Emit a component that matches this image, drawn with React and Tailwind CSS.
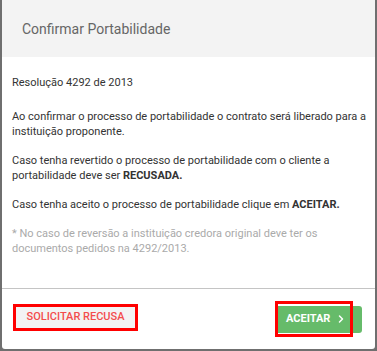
import React from 'react';
import { ChevronRight } from 'lucide-react';

const font = { fontFamily: 'Roboto, "Liberation Sans", sans-serif' };

export default function App() {
    return (
        <div className="w-[377px] h-[351px] bg-[#6f6f6f] overflow-hidden" style={font}>
            <div className="ml-[2px] w-[373px] h-[349px] bg-white rounded-b-[3px] flex flex-col overflow-hidden">
                <div className="h-[57px] bg-[#f3f3f3] flex items-center pl-[20px]">
                    <h2 className="text-[14px] text-[#666] leading-none">Confirmar Portabilidade</h2>
                </div>

                <div className="flex-1 pl-[10px] pr-[6px] pt-[18px] text-[11px] leading-[15px] text-[#333]">
                    <p className="mb-[19px]">Resolução 4292 de 2013</p>
                    <p className="mb-[14px]">Ao confirmar o processo de portabilidade o contrato será liberado para a instituição proponente.</p>
                    <p className="mb-[14px]">Caso tenha revertido o processo de portabilidade com o cliente a portabilidade deve ser <b className="font-bold">RECUSADA.</b></p>
                    <p className="mb-[14px]">Caso tenha aceito o processo de portabilidade clique em <b className="font-bold">ACEITAR.</b></p>
                    <p className="text-[#aaa] pr-[14px]">* No caso de reversão a instituição credora original deve ter os documentos pedidos na 4292/2013.</p>
                </div>

                <div className="h-[61px] border-t border-[#c4c4c4] flex items-center justify-between pl-[11px] pr-[13px]">
                    <button className="w-[125px] h-[27px] -mt-[3px] border-[3px] border-[#ff0000] bg-[#f3f3f3] text-[#f44c4c] text-[11px] font-medium uppercase flex items-center justify-center">
                        Solicitar Recusa
                    </button>
                    <div className="relative">
                        <button className="w-[87px] h-[27px] rounded-[3px] bg-[#66bb6a] text-white text-[11px] font-bold flex items-center pl-[11px] gap-[5px]">
                            ACEITAR
                            <ChevronRight size={12} strokeWidth={3} />
                        </button>
                        <div className="absolute left-0 -top-[5px] w-[78px] h-[36px] border-[3px] border-[#ff0000] pointer-events-none" />
                    </div>
                </div>
            </div>
        </div>
    );
}
